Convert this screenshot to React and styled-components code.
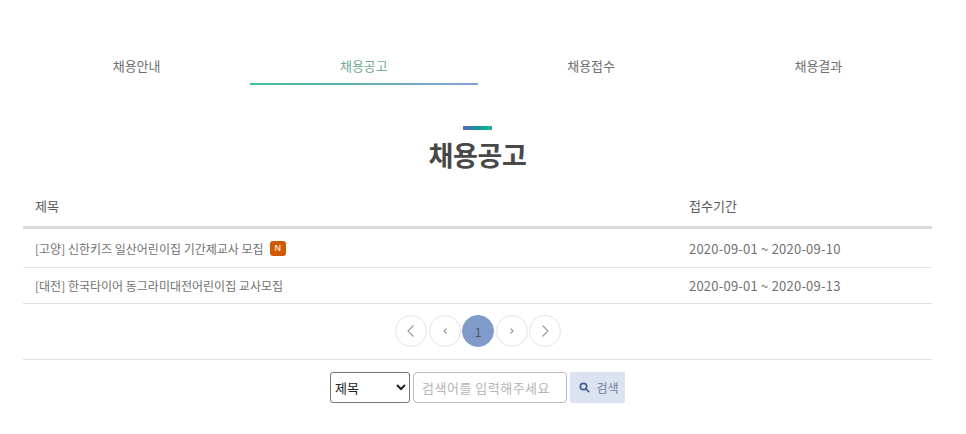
import React from "react";
import styled, { createGlobalStyle } from "styled-components";

const Global = createGlobalStyle`
  html, body { margin: 0; padding: 0; background: #fff; }
  body { font-family: "Noto Sans CJK KR", "Noto Sans", sans-serif; color: #555; }
`;
const Page = styled.div`
  width: 966px; height: 434px; padding: 0 34px 0 23px; box-sizing: border-box; overflow: hidden;
`;
const Tabs = styled.nav`
  display: grid; grid-template-columns: repeat(4, 1fr); padding-top: 47px;
`;
const Tab = styled.a`
  height: 36px; line-height: 37px; text-align: center; font-size: 13px;
  color: ${p => (p.$active ? "#74ab93" : "#6e6e6e")};
  border-bottom: 2px solid transparent;
  border-image: ${p => (p.$active ? "linear-gradient(90deg,#3dbf9f,#8a9fd0) 1" : "none")};
`;
const TitleWrap = styled.div`
  display: flex; flex-direction: column; align-items: center; padding-top: 41px;
`;
const Mark = styled.span`
  width: 29px; height: 4px; background: linear-gradient(90deg,#4a6fb5 0 20%,#14958f 45%,#21b394);
`;
const Title = styled.h2`
  margin: 5px 0 0; font-size: 27px; line-height: 40px; font-weight: 700; color: #484848; letter-spacing: -0.3px;
`;
const Table = styled.div`
  margin-top: 14px;
`;
const Row = styled.div`
  display: grid; grid-template-columns: 654px 1fr; padding-left: 12px; align-items: center;
  height: ${p => p.$h}px; box-sizing: border-box; font-size: 12px; color: #717171;
  border-bottom: ${p => p.$head ? "3px solid #d9d9d9" : `1px solid ${p.$line}`};
`;
const HeadCell = styled.div`
  font-size: 13px; color: #5c5c5c; padding-bottom: 4px;
`;
const Subject = styled.div`
  display: flex; align-items: center; gap: 6px;
`;
const DateCell = styled.div`
  font-size: 13px; color: #717171; letter-spacing: 0.22px;
`;
const NewBadge = styled.span`
  width: 16px; height: 15px; border-radius: 3px; background: #cf5a06; color: #f4d9b0;
  font-size: 9px; font-weight: 700; line-height: 15px; text-align: center; font-family: "Liberation Sans", sans-serif;
`;
const Pager = styled.div`
  display: flex; justify-content: center; gap: 1.5px; padding: 11px 0 10px 1px;
  height: 56px; box-sizing: border-box; border-bottom: 1px solid #e2e2e2;
`;
const PageBtn = styled.button`
  width: 32px; height: 32px; padding: 0; border-radius: 50%; display: flex; align-items: center; justify-content: center;
  background: ${p => (p.$active ? "#7f9bca" : "#fff")};
  border: 1px solid ${p => (p.$active ? "#7f9bca" : "#e3e3e3")};
  color: #555; font-size: 12px; font-family: inherit;
`;
const Search = styled.form`
  display: flex; justify-content: center; gap: 3px; padding: 12px 0 0; margin: 0;
`;
const Select = styled.select`
  width: 80px; height: 31px; box-sizing: border-box; background: #fff; color: #222;
  border: 1px solid #767676; border-radius: 3px; font-size: 13px; font-family: inherit;
`;
const Input = styled.input`
  width: 154px; height: 31px; box-sizing: border-box; border: 1px solid #bbb; border-radius: 4px;
  padding: 0 8px; font-size: 13px; font-family: inherit; letter-spacing: 0.5px;
  &::placeholder { color: #b5b5b5; opacity: 1; }
`;
const SearchBtn = styled.button`
  width: 55px; height: 31px; border: 0; border-radius: 2px; background: #dbe3f1; color: #6d7f9e; padding: 0 0 0 3px;
  display: flex; align-items: center; justify-content: center; gap: 6px; font-size: 12px; font-family: inherit;
`;

const Chev = ({ d }) => (
  <svg width="12" height="14" viewBox="0 0 12 14" fill="none" stroke="#999" strokeWidth="1.1"><path d={d} /></svg>
);

export default function App() {
  return (
    <Page>
      <Global />
      <Tabs>
        <Tab>채용안내</Tab>
        <Tab $active>채용공고</Tab>
        <Tab>채용접수</Tab>
        <Tab>채용결과</Tab>
      </Tabs>
      <TitleWrap>
        <Mark />
        <Title>채용공고</Title>
      </TitleWrap>
      <Table>
        <Row $head $h={40}>
          <HeadCell>제목</HeadCell>
          <HeadCell>접수기간</HeadCell>
        </Row>
        <Row $h={39} $line="#e6e6e6">
          <Subject>[고양] 신한키즈 일산어린이집 기간제교사 모집 <NewBadge>N</NewBadge></Subject>
          <DateCell>2020-09-01 ~ 2020-09-10</DateCell>
        </Row>
        <Row $h={36} $line="#e0e0e0">
          <Subject>[대전] 한국타이어 동그라미대전어린이집 교사모집</Subject>
          <DateCell>2020-09-01 ~ 2020-09-13</DateCell>
        </Row>
      </Table>
      <Pager>
        <PageBtn type="button"><Chev d="M8.5 1.5 3 7l5.5 5.5" /></PageBtn>
        <PageBtn type="button"><Chev d="M7.5 4.5 5 7l2.5 2.5" /></PageBtn>
        <PageBtn type="button" $active>1</PageBtn>
        <PageBtn type="button"><Chev d="M4.5 4.5 7 7l-2.5 2.5" /></PageBtn>
        <PageBtn type="button"><Chev d="M3.5 1.5 9 7l-5.5 5.5" /></PageBtn>
      </Pager>
      <Search onSubmit={e => e.preventDefault()}>
        <Select defaultValue="제목"><option>제목</option></Select>
        <Input placeholder="검색어를 입력해주세요" />
        <SearchBtn type="button">
          <svg width="11" height="11" viewBox="0 0 11 11" fill="none" stroke="#3f5f96" strokeWidth="1.7"><circle cx="4.5" cy="4.5" r="3.2" /><path d="M7 7l3.2 3.2" /></svg>
          검색
        </SearchBtn>
      </Search>
    </Page>
  );
}
